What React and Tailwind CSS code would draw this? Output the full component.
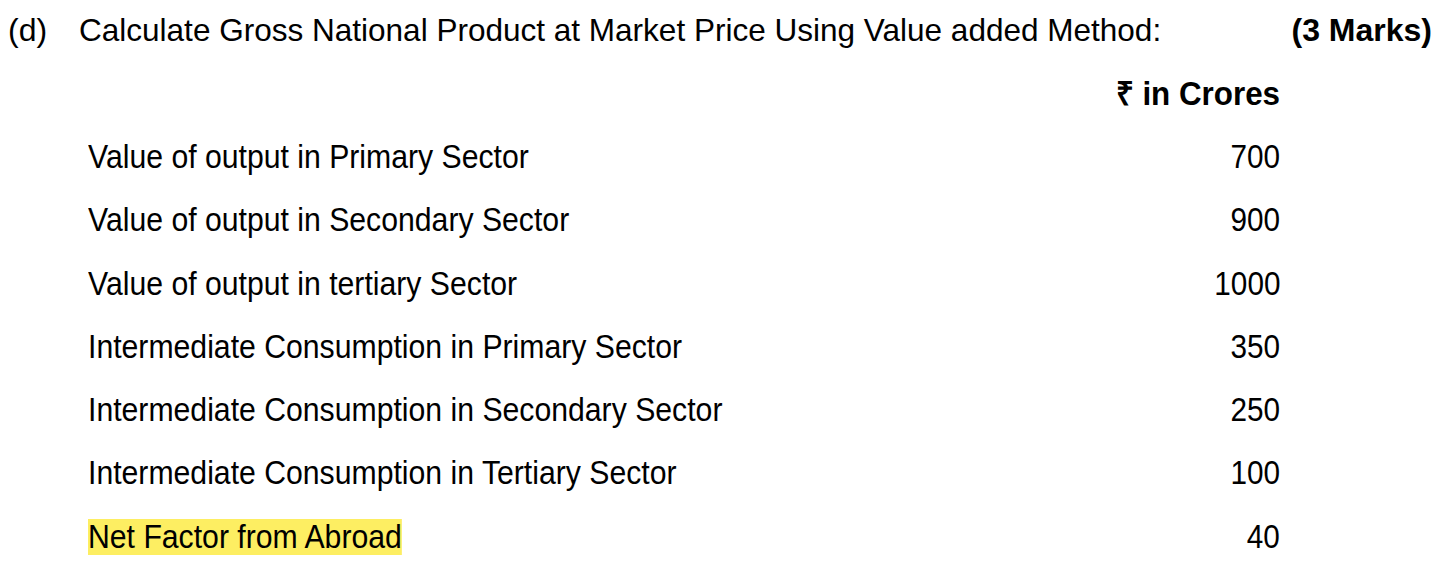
import React from 'react'

const rows = [
  ['Value of output in Primary Sector', '700'],
  ['Value of output in Secondary Sector', '900'],
  ['Value of output in tertiary Sector', '1000'],
  ['Intermediate Consumption in Primary Sector', '350'],
  ['Intermediate Consumption in Secondary Sector', '250'],
  ['Intermediate Consumption in Tertiary Sector', '100'],
  ['Net Factor from Abroad', '40', true]
]

export default function App() {
  return (
    <div
      className="w-[1443px] h-[583px] bg-white text-black text-[32px] leading-none"
      style={{ fontFamily: '"Liberation Sans Narrow", "Arial Narrow", "Liberation Sans", sans-serif' }}
    >
      <div className="flex items-center pt-[14px] pl-[8px] pr-[11px]">
        <span className="w-[71px]">(d)</span>
        <span className="flex-1 origin-left scale-x-[0.985]">
          Calculate Gross National Product at Market Price Using Value added Method:
        </span>
        <span className="font-bold">(3 Marks)</span>
      </div>
      <div className="flex justify-end w-[1280px] mt-[31px] font-bold text-[33px]">
        <span className="origin-right scale-x-[0.95]">₹ in Crores</span>
      </div>
      <div className="flex flex-col w-[1280px] pl-[88px] mt-[29px] gap-[27.3px] text-[33px]">
        {rows.map(([label, value, hl]) => (
          <div key={label} className="flex justify-between items-center leading-[36px]">
            <span className={hl ? 'origin-left scale-x-[0.915] bg-[#fdee62]' : 'origin-left scale-x-[0.915]'}>
              {label}
            </span>
            <span className="origin-right scale-x-[0.9]">{value}</span>
          </div>
        ))}
      </div>
    </div>
  )
}
